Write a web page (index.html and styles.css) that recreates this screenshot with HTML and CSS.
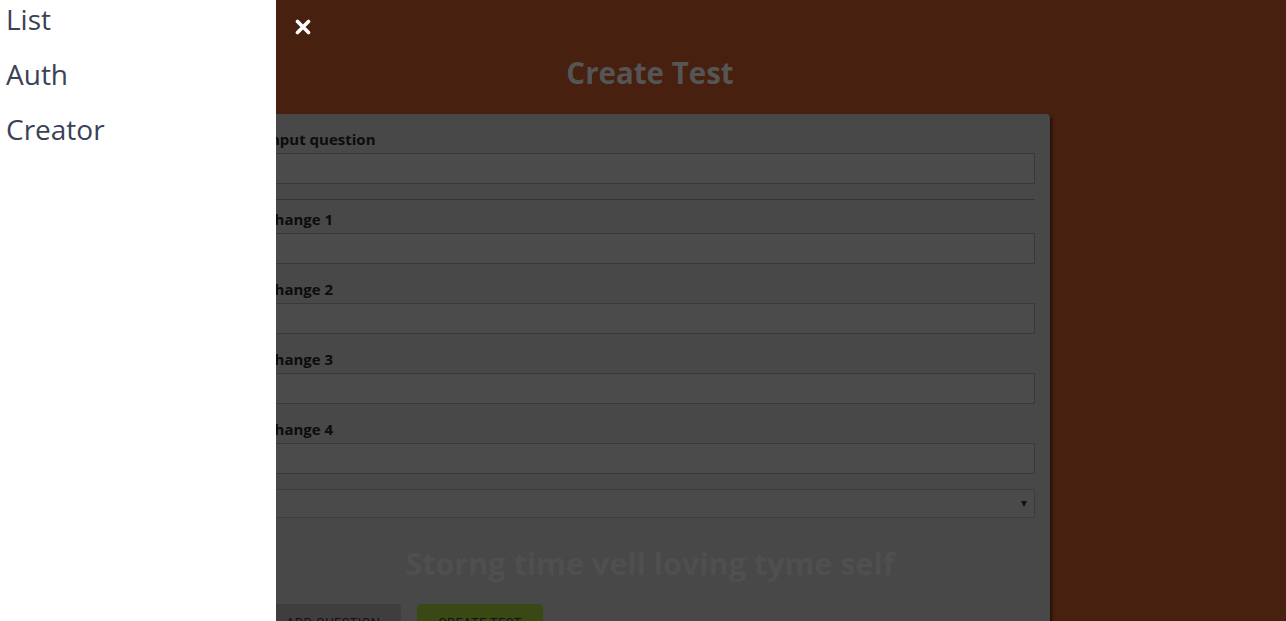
FILE: index.html
```html
<!DOCTYPE html>
<html lang="en">
<head>
<meta charset="utf-8">
<title>Create Test</title>
<link rel="stylesheet" href="styles.css">
</head>
<body>
<main class="page">
  <h1 class="page-title">Create Test</h1>
  <section class="card">
    <form class="test-form">
      <div class="field">
        <label class="field-label">Input question</label>
        <input class="field-input" type="text">
      </div>
      <hr class="divider">
      <div class="field">
        <label class="field-label">Change 1</label>
        <input class="field-input" type="text">
      </div>
      <div class="field">
        <label class="field-label">Change 2</label>
        <input class="field-input" type="text">
      </div>
      <div class="field">
        <label class="field-label">Change 3</label>
        <input class="field-input" type="text">
      </div>
      <div class="field">
        <label class="field-label">Change 4</label>
        <input class="field-input" type="text">
      </div>
      <div class="select-box">
        <span class="select-arrow"></span>
      </div>
      <h2 class="question-text">Storng time vell loving tyme self</h2>
      <div class="actions">
        <button type="button" class="btn btn-add">Add question</button>
        <button type="button" class="btn btn-create">Create test</button>
      </div>
    </form>
  </section>
</main>

<nav class="sidebar">
  <a class="nav-link" href="#">List</a>
  <a class="nav-link" href="#">Auth</a>
  <a class="nav-link" href="#">Creator</a>
</nav>
<button class="close-btn" type="button" aria-label="Close">
  <svg width="16" height="16" viewBox="0 0 16 16"><path d="M2.5 2.5 L13.5 13.5 M13.5 2.5 L2.5 13.5" stroke="#fff" stroke-width="3.6" stroke-linecap="round"/></svg>
</button>
</body>
</html>
```

FILE: styles.css
```css
html, body {
  margin: 0;
  padding: 0;
  overflow: hidden;
}
body {
  background: #47200f;
  font-family: "Open Sans", "Noto Sans", sans-serif;
  height: 621px;
}
.page {
  padding-left: 14px;
  padding-top: 53px;
}
.page-title {
  margin: 0 0 21px;
  text-align: center;
  font-size: 29.5px;
  line-height: 40px;
  font-weight: 700;
  color: #555555;
}
.card {
  width: 800px;
  margin: 0 auto;
  background: #484848;
  border-radius: 4px;
  box-shadow: 2px 2px 3px rgba(0, 0, 0, 0.55);
  padding: 15px 15px 40px;
  box-sizing: border-box;
}
.test-form {
  display: flex;
  flex-direction: column;
}
.field {
  display: flex;
  flex-direction: column;
  gap: 4px;
  margin-bottom: 15px;
}
.field-label {
  font-size: 15px;
  line-height: 20px;
  font-weight: 700;
  color: #0c0c0c;
}
.field-input {
  height: 31px;
  box-sizing: border-box;
  border: 1px solid #393939;
  background: #4b4b4b;
  margin: 0;
  padding: 0 6px;
  outline: none;
}
.divider {
  margin: 0 0 9px;
  border: 0;
  border-top: 1px solid #353535;
  height: 0;
}
.select-box {
  height: 29px;
  box-sizing: border-box;
  border: 1px solid #3d3d3d;
  background: #4a4a4a;
  display: flex;
  align-items: center;
  justify-content: flex-end;
  padding-right: 7px;
}
.select-arrow {
  width: 0;
  height: 0;
  border-left: 3.5px solid transparent;
  border-right: 3.5px solid transparent;
  border-top: 6px solid #111;
}
.question-text {
  margin: 25px 0 21px;
  text-align: center;
  font-size: 30.5px;
  line-height: 40px;
  font-weight: 700;
  color: #4f4f4f;
}
.actions {
  display: flex;
  gap: 16px;
}
.btn {
  height: 36px;
  border: 0;
  border-radius: 4px;
  padding: 0 21px;
  font-family: Roboto, "Open Sans", sans-serif;
  font-size: 13px;
  letter-spacing: 0.3px;
  text-transform: uppercase;
  color: #111;
}
.btn-add {
  background: #3e3e3e;
}
.btn-create {
  background: #394815;
}
.sidebar {
  position: fixed;
  top: 0;
  left: 0;
  bottom: 0;
  width: 276px;
  background: #ffffff;
  display: flex;
  flex-direction: column;
  gap: 17px;
  padding: 0 6px;
  box-sizing: border-box;
}
.nav-link {
  font-size: 28px;
  line-height: 38px;
  color: #3a4256;
  text-decoration: none;
}
.close-btn {
  position: fixed;
  top: 19px;
  left: 295px;
  width: 16px;
  height: 16px;
  padding: 0;
  border: 0;
  background: none;
  display: flex;
}
```
